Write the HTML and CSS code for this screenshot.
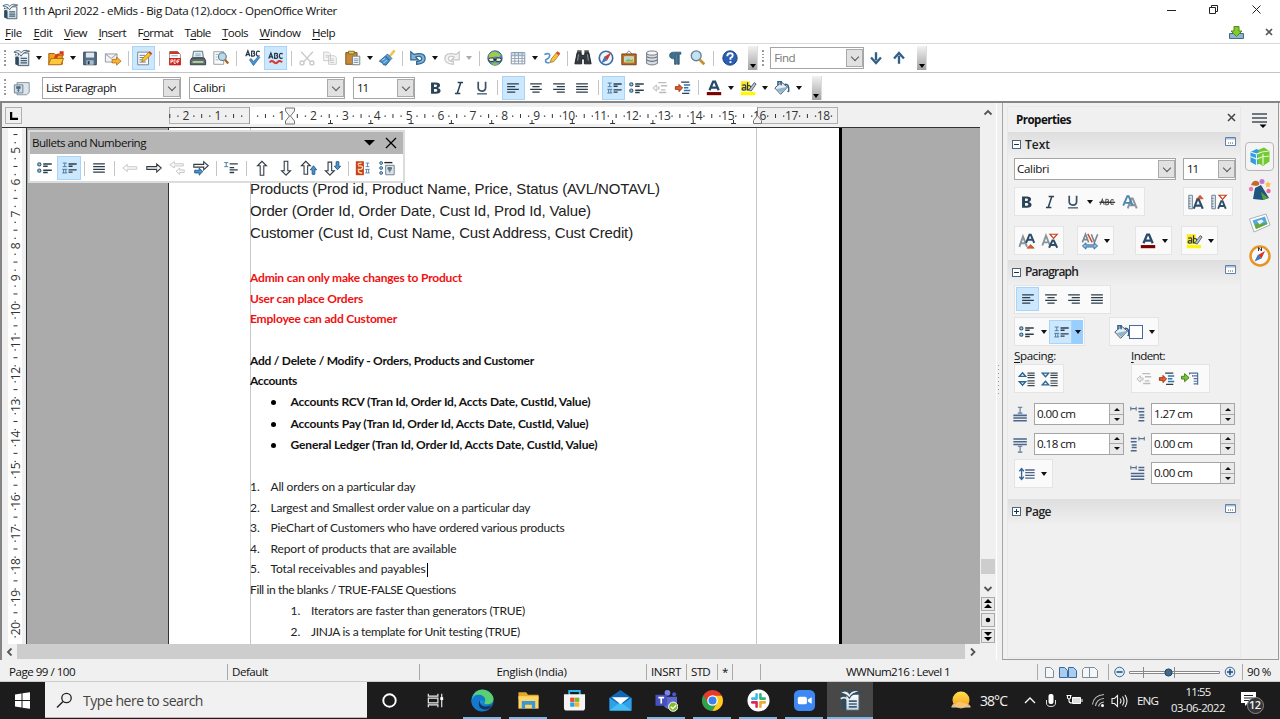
FILE: index.html
```html
<!DOCTYPE html>
<html lang="en">
<head>
<meta charset="utf-8">
<title>11th April 2022 - eMids - Big Data (12).docx - OpenOffice Writer</title>
<link rel="stylesheet" href="styles.css">
</head>
<body>
<svg class="defs" width="0" height="0">
  <defs>
  <linearGradient id="gEdge" x1="0" y1="0" x2="1" y2="1"><stop offset="0" stop-color="#2bb8e8"/><stop offset=".5" stop-color="#1b8fdc"/><stop offset="1" stop-color="#0c59a4"/></linearGradient>
  <linearGradient id="gSun" x1="0" y1="0" x2="0" y2="1"><stop offset="0" stop-color="#ffe14f"/><stop offset="1" stop-color="#f59a1b"/></linearGradient>
  <linearGradient id="gBox" x1="0" y1="0" x2="0" y2="1"><stop offset="0" stop-color="#fff"/><stop offset="1" stop-color="#c9d3dc"/></linearGradient>
  </defs>
  <symbol id="doc" viewBox="0 0 20 20"><path d="M6 4.500h11.500v14H6z" fill="url(#gBox)" stroke="#3d5566"/><path d="M2.500 5v12L6 18.500V8z" fill="#2c4a60"/><path d="M1 3.500C5 .5 8 2 9 4c2-3 6-3 9.500-1.500C14 3 11 4 9 8 7 5 5 4 1 3.500z" fill="#e9f0f4" stroke="#2d4b60" stroke-width=".9"/><path d="M1.500 8.500q4-2.500 6.500 1.500" fill="none" stroke="#dfe8ee" stroke-width="1.500"/><path d="M8.500 10.500h7M8.500 13h7M8.500 15.500h7" stroke="#3f6076" stroke-width="1.400"/></symbol>
  <symbol id="open" viewBox="0 0 20 20"><path d="M2 5h6l2 2h7v10H2z" fill="#f0a21f" stroke="#9b5b06"/><path d="M1.500 17.500l3-7h14l-3 7z" fill="#ffc83a" stroke="#a9670a"/><path d="M8 10c0-3 2-5 6-5V2.500h4.500V8L16 6c-3 0-4 1-4.500 4z" fill="#d83a16"/></symbol>
  <symbol id="save" viewBox="0 0 20 20"><path d="M3 3.500h14v14H3z" fill="#56708a" stroke="#26384b"/><path d="M5.500 4h9v5.500h-9z" fill="#dde7ee"/><path d="M6 12.500h8v5H6z" fill="#a9bccb"/><path d="M7.500 13.500h2V17h-2z" fill="#26384b"/></symbol>
  <symbol id="mail" viewBox="0 0 20 20"><path d="M1.500 5.500h13v9h-13z" fill="#f3f3f3" stroke="#8a94a0"/><path d="M1.500 5.500l6.500 5 6.500-5" fill="none" stroke="#8a94a0"/><path d="M9 11.500h5V9l5 4.500-5 4.500V15.500H9z" fill="#f9b233" stroke="#a8650b" stroke-width=".8"/></symbol>
  <symbol id="edit" viewBox="0 0 20 20"><path d="M3 3.500h12v14H3z" fill="#fbfbfb" stroke="#6f7e8c"/><path d="M5 7h6M5 9.500h6M5 12h3M5 14.500h7" stroke="#5d7284"/><path d="M7.500 14l1-3.500 7.500-7.500 2.500 2.500-7.500 7.500z" fill="#f9c330" stroke="#a56c09" stroke-width=".8"/><path d="M15 4l1.500-1.500 2.500 2.500L17.500 6.500z" fill="#d93a30"/></symbol>
  <symbol id="pdf" viewBox="0 0 20 20"><path d="M4 3h9l3 3v11.500H4z" fill="#fff" stroke="#8b8b8b"/><path d="M4 2.500h9l2.500 3H4z" fill="#c9372a"/><path d="M6 7.500h7" stroke="#999"/><path d="M3.500 10h13v8h-13z" fill="#cf2018"/><path d="M5.500 16v-4h2v2h-2M9 12v4h1.500l.8-1v-2l-.8-1zM13 16v-4h2.200M13 14h1.600" fill="none" stroke="#fff"/></symbol>
  <symbol id="print" viewBox="0 0 20 20"><path d="M5 2.500h10l1 7H4z" fill="#e4f0f5" stroke="#526572"/><path d="M7 5.500h6M7 7.500h6" stroke="#77a5b8"/><path d="M3 10h14l1.500 3v4.500h-17V13z" fill="#5d6b74" stroke="#2d3940"/><path d="M4 13.500h12v1.800H4z" fill="#c9e19a"/></symbol>
  <symbol id="preview" viewBox="0 0 20 20"><path d="M2 3h11v14H2z" fill="#fafafa" stroke="#8e98a1"/><path d="M4 6h3M4 9h2M4 12h3" stroke="#9aa"/><circle cx="11.500" cy="8.500" r="4.300" fill="#b8daf0" stroke="#66788a" stroke-width="1.300"/><path d="M14.500 12l3.500 4" stroke="#a8641a" stroke-width="2.500"/></symbol>
  <symbol id="spell" viewBox="0 0 20 20"><path d="M2 8l2.300-6L6.600 8M3 6.200h2.800M8.500 2V8h1.700q1.700 0 1.700-1.600t-1.700-1.500q1.400 0 1.400-1.400T10 2.300H8.500M17.500 3q-3.500-2-3.700 2 0 4 3.700 2.500" fill="none" stroke="#26384a" stroke-width="1.400"/><path d="M6 12l2-1.500 2.500 3.500 5.500-6 1.500 1.500-7 9z" fill="#4c92d0" stroke="#25629c" stroke-width=".7"/></symbol>
  <symbol id="auto" viewBox="0 0 20 20"><path d="M2 10.500l2.300-6 2.300 6M3 8.700h2.800M8.500 4.500v6h1.700q1.700 0 1.700-1.600t-1.700-1.500q1.400 0 1.400-1.400T10 4.800H8.500M17.500 5.500q-3.500-2-3.700 2 0 4 3.700 2.500" fill="none" stroke="#26384a" stroke-width="1.400"/><path d="M3 15q2.200-3 4.500-.5t4.500 0 4.800.3" fill="none" stroke="#d93a30" stroke-width="2.300"/></symbol>
  <symbol id="cut" viewBox="0 0 20 20"><g fill="none" stroke="#c9c9c9" stroke-width="1.500"><path d="M3.500 3l10 11M16.500 3l-10 11"/><circle cx="4.500" cy="15.500" r="2.200"/><circle cx="15.500" cy="15.500" r="2.200"/></g></symbol>
  <symbol id="copy" viewBox="0 0 20 20"><path d="M3 3.500h5.500l2 2V13H3zM8.500 7.500h6.500l2 2V17H8.500z" fill="#f7f7f7" stroke="#c6c6c6"/><path d="M5 7h4M5 9h3M10.500 11h4M10.500 13h4M10.500 15h4" stroke="#c6c6c6"/></symbol>
  <symbol id="paste" viewBox="0 0 20 20"><path d="M2 4h12.500v13H2z" fill="#c58a3c" stroke="#77480f"/><path d="M5 2.500h6.500v3H5z" fill="#e8d14c" stroke="#77651e"/><path d="M9.500 8h8v9.500h-8z" fill="#f6f8fa" stroke="#6c7b88"/><path d="M11 11h5M11 13h5M11 15h5" stroke="#7896ac"/></symbol>
  <symbol id="brush" viewBox="0 0 20 20"><path d="M18.500 1.500L13 8" stroke="#f0c34a" stroke-width="2.800"/><path d="M10.500 5.500l5 5-2 2-5-5z" fill="#5d9fd4" stroke="#416c96"/><path d="M8 8l5 5-4 5-3-.5-1-2-3.500-2z" fill="#4a92cf" stroke="#245b8e"/><path d="M4.500 12.500l3.500-2M6 15.500l4-3" stroke="#b7daf2"/></symbol>
  <symbol id="undo" viewBox="0 0 20 20"><path d="M2 3v9h8.500L7.500 9q5.500-2.500 6.500 1.500 0 3-5.500 3.500v3q9.500-.5 9.500-6.500Q17.500 3 5.500 6z" fill="#7fb2da" stroke="#2c608e" stroke-width="1.300"/></symbol>
  <symbol id="redo" viewBox="0 0 20 20"><path d="M18 3v9H9.500l3-3Q7 6.500 6 10.500q0 3 5.500 3.500v3Q2 16.500 2 10.500 2.500 3 14.500 6z" fill="#f3f3f3" stroke="#c6c6c6" stroke-width="1.300"/></symbol>
  <symbol id="globe" viewBox="0 0 20 20"><circle cx="10" cy="10" r="8" fill="#4b91c4" stroke="#335f80"/><path d="M3.500 6q3.500-4 7.500-3l5.500 3-2 3-4.500-1-3 2-4 1z" fill="#a4ca49"/><path d="M5.500 16.500q4.500-3 9 0-4.500 3-9 0z" fill="#8bbd41"/><rect x="3" y="10" width="6.500" height="3.800" rx="1.800" fill="#eee" stroke="#222"/><rect x="10.500" y="10" width="6.500" height="3.800" rx="1.800" fill="#eee" stroke="#222"/><path d="M8 11.800h4" stroke="#222"/></symbol>
  <symbol id="table" viewBox="0 0 20 20"><path d="M2.500 4h15v12.500h-15z" fill="#fff" stroke="#7489a0"/><path d="M3 4.500h14v3H3z" fill="#c3d6e8"/><path d="M2.500 7.500h15m-15 3h15m-15 3h15M6.500 4v12.500m4-12.500v12.500m4-12.500v12.500" stroke="#8b9dae"/></symbol>
  <symbol id="draw" viewBox="0 0 20 20"><path d="M1.500 6q6-2 6 1t-4.500 5q-1 4 4.500 3" fill="none" stroke="#5991ca" stroke-width="1.800"/><path d="M8 15l1.200-4 6.300-7.500 3 2L12 14z" fill="#f8c33a" stroke="#9b6812" stroke-width=".8"/><path d="M14.500 5l1.500-2.500 3 2L17.500 7z" fill="#d94c36"/></symbol>
  <symbol id="binoc" viewBox="0 0 20 20"><path d="M3.500 4H8v3h4V4h4.500L19 16.500h-7.500V11h-3v5.500H1z" fill="#343b42" stroke="#15191d"/><path d="M5 6L4 13M15 6l1 7" stroke="#9aa3ab"/><path d="M3.500 2.500h5M11.500 2.500h5" stroke="#555" stroke-width="2"/></symbol>
  <symbol id="compass" viewBox="0 0 20 20"><circle cx="10" cy="10" r="7.500" fill="#eef5fb" stroke="#3d6ba4" stroke-width="1.800"/><path d="M16 3.500l-4.500 9L8 9z" fill="#d53527"/><path d="M4.500 16l4-8 3 4.500z" fill="#3e76b9"/></symbol>
  <symbol id="gallery" viewBox="0 0 20 20"><path d="M6 6l4-4 4 4" fill="none" stroke="#777"/><path d="M2 5.500h16v12H2z" fill="#b5702a" stroke="#6d3c0b"/><path d="M5 8.500h10v6H5z" fill="#a5d8f5" stroke="#ebd6a1"/><path d="M5.500 14l3.500-3 3 1.500 2.500-1V14z" fill="#88b83a"/><circle cx="12" cy="10.500" r="1" fill="#f9d334"/></symbol>
  <symbol id="db" viewBox="0 0 20 20"><path d="M4 4.500v11.500q6 3.500 12 0V4.500z" fill="#d8dde2" stroke="#68727c"/><ellipse cx="10" cy="4.500" rx="6" ry="2.300" fill="#f6f6f6" stroke="#68727c"/><path d="M4 8.500q6 3 12 0M4 12.200q6 3 12 0" fill="none" stroke="#68727c" stroke-width="1.300"/></symbol>
  <symbol id="para" viewBox="0 0 20 20"><path d="M8.500 3.500h8v2.300h-1.800V17h-2V5.800h-1.200V17h-2v-6Q4 11 4 7.300 4 3.500 8.500 3.500z" fill="#3d7190" stroke="#234b64" stroke-width=".8"/></symbol>
  <symbol id="mag" viewBox="0 0 20 20"><circle cx="8" cy="7.500" r="5.500" fill="#c3e1f5" stroke="#6b8092" stroke-width="1.500"/><path d="M12 12l5 5" stroke="#c9902a" stroke-width="3"/></symbol>
  <symbol id="help" viewBox="0 0 20 20"><circle cx="10" cy="10" r="8" fill="#2a5db3" stroke="#163d80"/><path d="M7 8q0-3.300 3.100-3.300T13 7.300Q12.900 9 10.500 10v2" fill="none" stroke="#fff" stroke-width="2.100"/><path d="M9.500 13.500h2.100v2.100H9.500z" fill="#fff"/></symbol>
  <symbol id="fdown" viewBox="0 0 20 20"><path d="M10 3.500v9M4.500 9.500l5.500 6 5.500-6" fill="none" stroke="#315f86" stroke-width="2.600"/></symbol>
  <symbol id="fup" viewBox="0 0 20 20"><path d="M10 16.500v-9M4.500 10.500l5.500-6 5.500 6" fill="none" stroke="#315f86" stroke-width="2.600"/></symbol>
  <symbol id="styles" viewBox="0 0 20 20"><path d="M4.500 4h13.500v11l-3 2.500H4.500z" fill="#dfe6eb" stroke="#7c8d9b"/><path d="M1.500 6.500h9.500v9H1.500z" fill="#cfdbe4" stroke="#667c8e"/><path d="M4 8.500h4v2H4zM6 10.500v4M4.500 12.500h3" fill="#4f6c82" stroke="#4f6c82"/></symbol>
  <symbol id="bold" viewBox="0 0 20 20"><path fill-rule="evenodd" d="M4.500 4h5.200q4.800 0 4.800 3.100 0 2.200-2.500 2.800 3.100.5 3.100 3 0 3.600-5.300 3.600H4.500zM7.800 6.200v2.700h1.500q1.800 0 1.800-1.400T9.300 6.200zM7.800 11.200v3h1.700q2 0 2-1.500t-2-1.500z" fill="#2b4357"/></symbol>
  <symbol id="ital" viewBox="0 0 20 20"><path d="M8.500 4h6M5.500 16h6M12 4L8 16" fill="none" stroke="#2b4357" stroke-width="1.700"/></symbol>
  <symbol id="under" viewBox="0 0 20 20"><path d="M5.800 3V9.500q0 4 4.100 4t4.100-4V3" fill="none" stroke="#3c5366" stroke-width="1.900"/><path d="M4.500 16.500h11" stroke="#3c5366" stroke-width="1.400"/></symbol>
  <symbol id="al" viewBox="0 0 20 20"><path d="M3.500 5.500h13M3.500 8.500h9M3.500 11.500h13M3.500 14.500h9" stroke="#2b3c4a" stroke-width="1.400"/></symbol>
  <symbol id="ac" viewBox="0 0 20 20"><path d="M3.500 5.500h13M6 8.500h8M3.500 11.500h13M6 14.500h8" stroke="#2b3c4a" stroke-width="1.400"/></symbol>
  <symbol id="ar" viewBox="0 0 20 20"><path d="M3.500 5.500h13M7.500 8.500h9M3.500 11.500h13M7.500 14.500h9" stroke="#2b3c4a" stroke-width="1.400"/></symbol>
  <symbol id="aj" viewBox="0 0 20 20"><path d="M3.500 5.500h13M3.500 8.500h13M3.500 11.500h13M3.500 14.500h13" stroke="#2b3c4a" stroke-width="1.400"/></symbol>
  <symbol id="num" viewBox="0 0 20 20"><path d="M3 4.500h4.500m-2.200 0v4m-2.300 0h4.500M2.500 11.500H8M2.500 15.500H8M4 11.500v4M6.500 11.500v4" stroke="#4d7fa3" fill="none" stroke-width="1.100"/><path d="M9.500 5.500h9M9.500 8h4.500M9.500 12h9M9.500 14.500h4.500" stroke="#2b3c4a" stroke-width="1.500"/></symbol>
  <symbol id="bul" viewBox="0 0 20 20"><circle cx="3.700" cy="6" r="1.800" fill="#9fc2da" stroke="#2d5b7c" stroke-width="1.200"/><circle cx="3.700" cy="13" r="1.800" fill="#9fc2da" stroke="#2d5b7c" stroke-width="1.200"/><path d="M8 5.500h9.500M8 8h5M8 12.500h9.500M8 15h5" stroke="#2b3c4a" stroke-width="1.500"/></symbol>
  <symbol id="outd" viewBox="0 0 20 20"><path d="M2 10l4-3.500v2.300h3v2.400H6v2.300z" fill="#eee" stroke="#bcbcbc"/><path d="M8 4h9M11 7.500h7M11 12h5M9 15h8" stroke="#bcbcbc" stroke-width="1.400"/></symbol>
  <symbol id="ind" viewBox="0 0 20 20"><path d="M9.500 10L5.500 6v2.500H1.500v3h4V14z" fill="#e8602c" stroke="#8f2d08"/><path d="M8 3.500h9M9 16h8" stroke="#2b3c4a" stroke-width="1.400"/><path d="M11 6.700h7M11 9.700h5M11 12.800h7" stroke="#2f75ad" stroke-width="1.600"/></symbol>
  <symbol id="fcol" viewBox="0 0 20 20"><path d="M5 12.500L9 3h2.200l4 9.500M6.800 9.500H13.500" fill="none" stroke="#27496a" stroke-width="2.500"/><path d="M2 14.500h16v3.500H2z" fill="#7b0000"/></symbol>
  <symbol id="hcol" viewBox="0 0 20 20"><path d="M2 2.500h10v11H2z" fill="#ffe619"/><path d="M3.500 7Q7.500 5.500 7.500 8V12q-4 1-4-1t4-1M9.500 3.500V12q3.500.5 3.500-2.500t-3.500-2" fill="none" stroke="#243746" stroke-width="1.300"/><path d="M11 12l6-8 2 1.500-5.500 8z" fill="#b8c3ca" stroke="#495b66"/><path d="M2 14.500h16v3.500H2z" fill="#fff700"/></symbol>
  <symbol id="bucket" viewBox="0 0 20 20"><path d="M2 10l7.500-6.500 6.500 5.500-7.500 8z" fill="#e6eef3" stroke="#344b5d"/><path d="M4 11l5 4.500L15.500 9z" fill="#8db3cf"/><path d="M5.500 7V3h3.500v4M13 6q5-1 4.500 7-.5 2-1 0" fill="none" stroke="#2f6288" stroke-width="1.700"/></symbol>
  <symbol id="arl" viewBox="0 0 20 20"><path d="M2 10l5-4v2.600h10.500v2.800H7V14z" fill="#fafafa" stroke="#c3c3c3"/></symbol>
  <symbol id="arr" viewBox="0 0 20 20"><path d="M18 10l-5-4.500v3H2v3h11v3z" fill="#fafafa" stroke="#333b43" stroke-width="1.200"/></symbol>
  <symbol id="arll" viewBox="0 0 20 20"><path d="M2 6.500L7 3v2.300h10v2.400H7V10zM9 13.500l4-3.500v2.200h5V15h-5v2.200z" fill="#fafafa" stroke="#c3c3c3"/></symbol>
  <symbol id="arrr" viewBox="0 0 20 20"><path d="M18 7.500L13 3v3H2v3h11v3z" fill="#fafafa" stroke="#333b43" stroke-width="1.200"/><path d="M12 14L8 10v2.500H3v3h5V18z" fill="#4b93cc" stroke="#235b8a"/></symbol>
  <symbol id="aru" viewBox="0 0 20 20"><path d="M10 2.500L5 7.500h3V18h4V7.500h3z" fill="#fafafa" stroke="#333b43" stroke-width="1.200"/></symbol>
  <symbol id="ard" viewBox="0 0 20 20"><path d="M10 18l-5-5h3V2.500h4V13h3z" fill="#fafafa" stroke="#333b43" stroke-width="1.200"/></symbol>
  <symbol id="aruu" viewBox="0 0 20 20"><path d="M6.500 2.500L1.500 7.500h3V17h4V7.500h3z" fill="#fafafa" stroke="#333b43" stroke-width="1.200"/><path d="M15 7.500L11.500 12h2v5h3v-5h2z" fill="#4b93cc" stroke="#235b8a"/></symbol>
  <symbol id="ardd" viewBox="0 0 20 20"><path d="M6.500 18l-5-5h3V3.500h4V13h3z" fill="#fafafa" stroke="#333b43" stroke-width="1.200"/><path d="M15 12l-3.500-4h2V3h3v5h2z" fill="#4b93cc" stroke="#235b8a"/></symbol>
  <symbol id="nonum" viewBox="0 0 20 20"><path d="M2.500 4h4.500m-2.300 0v4.500m-2.200 0h4.500" stroke="#4d7fa3" fill="none" stroke-width="1.100"/><path d="M8.500 5.500h9M8.500 9.500h5M8.500 12h9M8.500 15h5" stroke="#2b3c4a" stroke-width="1.400"/></symbol>
  <symbol id="restart" viewBox="0 0 20 20"><path d="M2 2.500h9V18H2z" fill="#c9421d"/><path d="M4.500 6.500q0-2 4-2M4.500 8q5-1 5 1.500T5 11.500v2q0 2 4 2" fill="none" stroke="#ffe2a8" stroke-width="1.500"/><path d="M13 4.500h4m-2 0v4m-2 0h4M12.500 11.500h5M12.500 15.500h5M13.800 11.500v4M16.200 11.500v4" stroke="#4f86b0" fill="none"/></symbol>
  <symbol id="bdlg" viewBox="0 0 20 20"><circle cx="3.500" cy="4.500" r="1.600" fill="#9fc2da" stroke="#2d5b7c"/><circle cx="3.500" cy="10" r="1.600" fill="#9fc2da" stroke="#2d5b7c"/><circle cx="3.500" cy="15.500" r="1.600" fill="#9fc2da" stroke="#2d5b7c"/><path d="M7 4h9" stroke="#222" stroke-width="1.500"/><path d="M8.500 7H18v10.500H8.500z" fill="#dbe3e9" stroke="#66798a"/><path d="M11 9.500h4v2h-4zM13 11v4M11.500 13h3" fill="#5b7488" stroke="#5b7488"/></symbol>
  <symbol id="strike" viewBox="0 0 20 20"><path d="M2.500 13l2.300-6L7 13M8.700 7v6h1.500q1.700 0 1.700-1.500T10.200 10q1.400 0 1.400-1.500T10.200 7H8.700M17.500 8q-3.300-2-3.500 2 0 4 3.500 2" fill="none" stroke="#555" stroke-width="1.200"/><path d="M1.500 10.300h17.500" stroke="#222" stroke-width="1.300"/></symbol>
  <symbol id="shadow" viewBox="0 0 20 20"><path d="M7.500 17L11.500 6H13l4.500 11M9.500 13.500h6.500" fill="none" stroke="#8c959d" stroke-width="2.200"/><path d="M2.500 14L7 3.500h1.500l4.500 10.500M4.500 11h6.500" fill="none" stroke="#4c86ad" stroke-width="2.100"/></symbol>
  <symbol id="grow" viewBox="0 0 20 20"><path d="M2 2.500h4v15H2z" fill="#dde6ed" stroke="#65798a"/><path d="M2 6h2M2 9h2M2 12h2M2 15h2" stroke="#65798a"/><path d="M7.500 17.500l4-10.500H13l4.500 10.500M9.500 14h6.500" fill="none" stroke="#2d4d69" stroke-width="2.300"/><path d="M11 6.500l3.500-4 3.500 4z" fill="#e25a2b" stroke="#96300d" stroke-width=".6"/></symbol>
  <symbol id="shrink" viewBox="0 0 20 20"><path d="M2 2.500h4v15H2z" fill="#dde6ed" stroke="#65798a"/><path d="M2 6h2M2 9h2M2 12h2M2 15h2" stroke="#65798a"/><path d="M9 17.500L12.500 9H14l3.500 8.500M10.500 14.500h6" fill="none" stroke="#2d4d69" stroke-width="2.100"/><path d="M10 2.500h8l-4 4.500z" fill="#fff" stroke="#c8401b" stroke-width="1.300"/></symbol>
  <symbol id="sup" viewBox="0 0 20 20"><path d="M1.500 16.500L5.500 5l4.500 11.500M3 12.500h5.500" fill="none" stroke="#8a949c" stroke-width="2.100"/><path d="M9 12l3.700-9h1.500L18 12M10.500 8.700h6.500" fill="none" stroke="#2d4d69" stroke-width="2.200"/><path d="M10 18l4-4 4 4z" fill="#e25a2b" stroke="#96300d" stroke-width=".6"/></symbol>
  <symbol id="sub" viewBox="0 0 20 20"><path d="M1.500 15L5.500 4l4.500 11M3 11.500h5.500" fill="none" stroke="#8a949c" stroke-width="2.100"/><path d="M9 17.500l3.700-8h1.500l3.800 8M10.500 14.500h6.500" fill="none" stroke="#2d4d69" stroke-width="2.200"/><path d="M10 2.500h8L14 7z" fill="#fff" stroke="#c8401b" stroke-width="1.300"/></symbol>
  <symbol id="kern" viewBox="0 0 20 20"><path d="M1.500 11.500L5 2.500l3.500 9M2.500 8.500h5M11.500 2.500L15 11.500l3.500-9" fill="none" stroke="#7b8790" stroke-width="1.800"/><path d="M7.500 2l5 9.500" stroke="#d3422c" stroke-width="1.600"/><path d="M1.500 15.500l4-3.500v2.300h9V12l4 3.500-4 3.500v-2.300h-9V19z" fill="#89bce1" stroke="#2c6796"/></symbol>
  <symbol id="spinc" viewBox="0 0 20 20"><path d="M5 3l3.500 4h-7zM5 17l3.500-4h-7z" fill="#e6f3fb" stroke="#276696" stroke-width="1.500"/><path d="M10.500 3.500h8M10.500 6h8M10.500 8.500h8M10.500 12h8M10.500 14.700h8M10.500 17.300h8" stroke="#3c4a56" stroke-width="1.300"/></symbol>
  <symbol id="spdec" viewBox="0 0 20 20"><path d="M5 7.500L8.500 3.500h-7zM5 12.500l3.500 4h-7z" fill="#e6f3fb" stroke="#276696" stroke-width="1.500"/><path d="M10.500 3.500h8M10.500 6h8M10.500 8.500h8M10.500 12h8M10.500 14.700h8M10.500 17.300h8" stroke="#3c4a56" stroke-width="1.300"/></symbol>
  <symbol id="hang" viewBox="0 0 20 20"><path d="M.5 7H4V4l5 4.500L4 13v-3H.5z" fill="#79c537" stroke="#3a7b13"/><path d="M9.500 5V3.500H19M13 5.500v2M14 6.500h5M14 9.500h5M14 12.500h5M14 15.500h5M18.500 3.500v13" fill="none" stroke="#4c719d" stroke-width="1.300"/></symbol>
  <symbol id="above" viewBox="0 0 20 20"><path d="M6.500 2.500h5m-2.500 0V9m-2.500 0h5" fill="none" stroke="#5a7695" stroke-width="1.200"/><path d="M1.500 11.500h15M1.500 14.500h15M1.500 17.500h15" stroke="#4a668c" stroke-width="1.800"/></symbol>
  <symbol id="below" viewBox="0 0 20 20"><path d="M6.500 12.500h5m-2.500 0V19m-2.500 0h5" fill="none" stroke="#5a7695" stroke-width="1.200"/><path d="M1.500 4.500h15M1.500 7.500h15M1.500 10.500h15" stroke="#4a668c" stroke-width="1.800"/></symbol>
  <symbol id="before" viewBox="0 0 20 20"><path d="M2 2v4m0-2h6m0-2v4" fill="none" stroke="#5a7695" stroke-width="1.200"/><path d="M10.500 4h6.500M10.500 7.500H17M11.500 11H17M11.500 14H17M10.500 17.500H17" stroke="#4a668c" stroke-width="1.700"/></symbol>
  <symbol id="after" viewBox="0 0 20 20"><path d="M11 2v4m0-2h6m0-2v4" fill="none" stroke="#5a7695" stroke-width="1.200"/><path d="M2 4h6.500M2 7.500h6.500M3 11h5.500M3 14h5.500M2 17.500h6.500" stroke="#4a668c" stroke-width="1.700"/></symbol>
  <symbol id="first" viewBox="0 0 20 20"><path d="M2 2v4m0-2h6m0-2v4" fill="none" stroke="#5a7695" stroke-width="1.200"/><path d="M10.500 4H17M10.500 7H17M2 10.500h15M2 13.500h15M2 17h15" stroke="#4a668c" stroke-width="1.700"/></symbol>
  <symbol id="lsp" viewBox="0 0 20 20"><path d="M4 4.500v11M1.500 7L4 4l2.500 3M1.500 13L4 16l2.500-3" fill="none" stroke="#37669a" stroke-width="1.500"/><path d="M8 5.500h10.500M8 8.500h10.500M8 11.500h10.500M8 14.500h10.500" stroke="#4b6489" stroke-width="1.500"/></symbol>
  <symbol id="more" viewBox="0 0 11 9"><path d="M.5.500h10v8H.5z" fill="#fff" stroke="#6180ae"/><path d="M1 1h9v1.500H1z" fill="#a9bedb"/><path d="M3 6h1m1 0h1m1 0h1" stroke="#555"/></symbol>
</svg>

<div class="window">
  <header class="titlebar">
    <svg class="i16"><use href="#doc"/></svg>
    <span class="caption" data-w="315">11th April 2022 - eMids - Big Data (12).docx - OpenOffice Writer</span>
    <svg class="winbtns" viewBox="0 0 100 20"><path d="M1 9.500h9" stroke="#222"/><path d="M43.500 6.500h6v6h-6zM45.500 6V4.500h6v6H50" fill="none" stroke="#222"/><path d="M86.500 4.500l8 8m0-8l-8 8" stroke="#222"/></svg>
  </header>
  <nav class="menubar">
    <span data-w="17"><u>F</u>ile</span><span data-w="19"><u>E</u>dit</span><span data-w="23"><u>V</u>iew</span><span data-w="27.500"><u>I</u>nsert</span><span data-w="35.500">F<u>o</u>rmat</span><span data-w="26">T<u>a</u>ble</span><span data-w="26"><u>T</u>ools</span><span data-w="41"><u>W</u>indow</span><span data-w="23"><u>H</u>elp</span>
    <svg class="menuend" viewBox="0 0 46 18"><path d="M1.500 9.500h14v5h-14z" fill="#8ab6d3" stroke="#476a83"/><path d="M6 2.500h5V7h3l-5.500 5.500L3 7h3z" fill="#86c82d" stroke="#4c8a12"/><path d="M38 5l6 6m0-6l-6 6" stroke="#555" stroke-width="1.700"/></svg>
  </nav>

  <div class="toolbar">
    <i class="grip"></i>
    <b class="b"><svg><use href="#doc"/></svg></b><i class="dd"></i>
    <b class="b"><svg><use href="#open"/></svg></b><i class="dd"></i>
    <b class="b"><svg><use href="#save"/></svg></b><b class="b"><svg><use href="#mail"/></svg></b><i class="sep"></i>
    <b class="b on"><svg><use href="#edit"/></svg></b><i class="sep"></i>
    <b class="b"><svg><use href="#pdf"/></svg></b><b class="b"><svg><use href="#print"/></svg></b><b class="b"><svg><use href="#preview"/></svg></b><i class="sep"></i>
    <b class="b"><svg><use href="#spell"/></svg></b><b class="b on"><svg><use href="#auto"/></svg></b><i class="sep"></i>
    <b class="b"><svg><use href="#cut"/></svg></b><b class="b"><svg><use href="#copy"/></svg></b><b class="b"><svg><use href="#paste"/></svg></b><i class="dd"></i>
    <b class="b"><svg><use href="#brush"/></svg></b><i class="sep"></i>
    <b class="b"><svg><use href="#undo"/></svg></b><i class="dd"></i><b class="b"><svg><use href="#redo"/></svg></b><i class="dd off"></i><i class="sep"></i>
    <b class="b"><svg><use href="#globe"/></svg></b><b class="b"><svg><use href="#table"/></svg></b><i class="dd"></i><b class="b"><svg><use href="#draw"/></svg></b><i class="sep"></i>
    <b class="b"><svg><use href="#binoc"/></svg></b><b class="b"><svg><use href="#compass"/></svg></b><b class="b"><svg><use href="#gallery"/></svg></b><b class="b"><svg><use href="#db"/></svg></b><b class="b"><svg><use href="#para"/></svg></b><b class="b"><svg><use href="#mag"/></svg></b><i class="sep"></i>
    <b class="b"><svg><use href="#help"/></svg></b>
    <i class="over"></i><i class="grip second"></i>
    <div class="combo find"><span data-w="21">Find</span><i class="cb"></i></div>
    <b class="b"><svg><use href="#fdown"/></svg></b><b class="b"><svg><use href="#fup"/></svg></b>
    <i class="over"></i>
  </div>
  <div class="toolbar fmt">
    <i class="grip"></i>
    <b class="b"><svg><use href="#styles"/></svg></b>
    <div class="combo c-style"><span data-w="70">List Paragraph</span><i class="cb"></i></div>
    <div class="combo c-font"><span data-w="32">Calibri</span><i class="cb"></i></div>
    <div class="combo c-size"><span data-w="11">11</span><i class="cb"></i></div>
    <b class="b"><svg><use href="#bold"/></svg></b><b class="b"><svg><use href="#ital"/></svg></b><b class="b"><svg><use href="#under"/></svg></b><i class="sep"></i>
    <b class="b on"><svg><use href="#al"/></svg></b><b class="b"><svg><use href="#ac"/></svg></b><b class="b"><svg><use href="#ar"/></svg></b><b class="b"><svg><use href="#aj"/></svg></b><i class="sep"></i>
    <b class="b on"><svg><use href="#num"/></svg></b><b class="b"><svg><use href="#bul"/></svg></b><b class="b"><svg><use href="#outd"/></svg></b><b class="b"><svg><use href="#ind"/></svg></b><i class="sep"></i>
    <b class="b"><svg><use href="#fcol"/></svg></b><i class="dd"></i><b class="b"><svg><use href="#hcol"/></svg></b><i class="dd"></i><b class="b"><svg><use href="#bucket"/></svg></b><i class="dd"></i>
    <i class="over"></i>
  </div>

  <main class="work">
    <section class="editor">
      <div class="rulerrow">
        <i class="tabkind"><svg width="8" height="8"><path d="M1 0v7h7" fill="none" stroke="#000" stroke-width="2.500"/></svg></i>
        <svg class="hruler" id="hruler" width="960" height="25" viewBox="24 103 960 25"></svg>
      </div>
      <div class="canvasrow">
        <svg class="vruler" id="vruler" width="24" height="516" viewBox="2 128 24 516"></svg>
        <div class="canvas">
          <article class="page">
            <div class="frame">
              <p class="arial"><span data-w="410">Products (Prod id, Product Name, Price, Status (AVL/NOTAVL)</span></p>
              <p class="arial"><span data-w="341">Order (Order Id, Order Date, Cust Id, Prod Id, Value)</span></p>
              <p class="arial"><span data-w="383">Customer (Cust Id, Cust Name, Cust Address, Cust Credit)</span></p>
              <p class="arial blank">&nbsp;</p>
              <p class="red"><span data-w="212">Admin can only make changes to Product</span></p>
              <p class="red"><span data-w="113">User can place Orders</span></p>
              <p class="red"><span data-w="147">Employee can add Customer</span></p>
              <p>&nbsp;</p>
              <p class="bold"><span data-w="284">Add / Delete / Modify - Orders, Products and Customer</span></p>
              <p class="bold"><span data-w="47">Accounts</span></p>
              <p class="bold item"><i class="dot"></i><span data-w="300">Accounts RCV (Tran Id, Order Id, Accts Date, CustId, Value)</span></p>
              <p class="bold item"><i class="dot"></i><span data-w="298">Accounts Pay (Tran Id, Order Id, Accts Date, CustId, Value)</span></p>
              <p class="bold item"><i class="dot"></i><span data-w="307">General Ledger (Tran Id, Order Id, Accts Date, CustId, Value)</span></p>
              <p>&nbsp;</p>
              <p><em>1.</em><span data-w="145">All orders on a particular day</span></p>
              <p><em>2.</em><span data-w="260">Largest and Smallest order value on a particular day</span></p>
              <p><em>3.</em><span data-w="294">PieChart of Customers who have ordered various products</span></p>
              <p><em>4.</em><span data-w="186">Report of products that are available</span></p>
              <p><em>5.</em><span data-w="155">Total receivables and payables</span><i class="caret"></i></p>
              <p class="fill"><span data-w="206">Fill in the blanks / TRUE-FALSE Questions</span></p>
              <p class="deep"><em>1.</em><span data-w="214">Iterators are faster than generators (TRUE)</span></p>
              <p class="deep"><em>2.</em><span data-w="209">JINJA is a template for Unit testing (TRUE)</span></p>
            </div>
          </article>
          <div class="floatbar">
            <div class="fhead"><span data-w="114">Bullets and Numbering</span><svg width="36" height="14"><path d="M0 4h11l-5.500 5.500z"/><path d="M22 2l10 10m0-10L22 12" stroke="#000" stroke-width="1.300"/></svg></div>
            <div class="fbody">
              <b class="b"><svg><use href="#bul"/></svg></b><b class="b on"><svg><use href="#num"/></svg></b><i class="sep"></i>
              <b class="b"><svg><use href="#aj"/></svg></b><i class="sep"></i>
              <b class="b"><svg><use href="#arl"/></svg></b><b class="b"><svg><use href="#arr"/></svg></b><b class="b"><svg><use href="#arll"/></svg></b><b class="b"><svg><use href="#arrr"/></svg></b><i class="sep"></i>
              <b class="b"><svg><use href="#nonum"/></svg></b><i class="sep"></i>
              <b class="b"><svg><use href="#aru"/></svg></b><b class="b"><svg><use href="#ard"/></svg></b><b class="b"><svg><use href="#aruu"/></svg></b><b class="b"><svg><use href="#ardd"/></svg></b><i class="sep"></i>
              <b class="b"><svg><use href="#restart"/></svg></b><b class="b"><svg><use href="#bdlg"/></svg></b>
            </div>
          </div>
        </div>
      </div>
      <div class="hscroll"><svg width="15" height="16"><path d="M9.500 4.500l-3.500 3.500 3.500 3.500" fill="none" stroke="#555" stroke-width="1.800"/></svg><i class="thumb"></i><svg width="15" height="16"><path d="M6 4.500l3.500 3.500L6 11.500" fill="none" stroke="#555" stroke-width="1.800"/></svg></div>
    </section>
    <div class="vscroll">
      <svg width="16" height="20"><path d="M4.500 11.500L8 8l3.500 3.500" fill="none" stroke="#555" stroke-width="1.800"/></svg>
      <i class="vthumb"></i>
      <svg width="16" height="18"><path d="M4.500 8L8 11.500 11.500 8" fill="none" stroke="#555" stroke-width="1.800"/></svg>
      <b class="nav"><svg width="12" height="12"><path d="M6 1l4 4H2zM6 6l4 4H2z"/></svg></b>
      <b class="nav"><svg width="12" height="12"><circle cx="6" cy="6" r="2.300"/></svg></b>
      <b class="nav"><svg width="12" height="12"><path d="M6 6l4-4H2zM6 11l4-4H2z"/></svg></b>
    </div>
    <div class="splitter"></div>
    <aside class="sidebar">
      <div class="deck">
        <div class="dtitle"><span data-w="55">Properties</span><svg width="9" height="9"><path d="M1 1l7 7m0-7L1 8" stroke="#444" stroke-width="1.500"/></svg></div>
        <h3><i class="pm"></i><span data-w="25">Text</span><svg class="more"><use href="#more"/></svg></h3>
        <div class="row r-combo"><div class="combo s-font"><span data-w="32">Calibri</span><i class="cb"></i></div><div class="combo s-size"><span data-w="11">11</span><i class="cb"></i></div></div>
        <div class="row r-a">
          <div class="grp g130"><b class="b"><svg><use href="#bold"/></svg></b><b class="b"><svg><use href="#ital"/></svg></b><b class="b"><svg><use href="#under"/></svg></b><i class="dd"></i><b class="b"><svg><use href="#strike"/></svg></b><b class="b"><svg><use href="#shadow"/></svg></b></div>
          <div class="grp g50 m39"><b class="b"><svg><use href="#grow"/></svg></b><b class="b"><svg><use href="#shrink"/></svg></b></div>
        </div>
        <div class="row r-b">
          <div class="grp g50"><b class="b"><svg><use href="#sup"/></svg></b><b class="b"><svg><use href="#sub"/></svg></b></div>
          <div class="grp g37 m13"><b class="b"><svg><use href="#kern"/></svg></b><i class="dd"></i></div>
          <div class="grp g37 m21"><b class="b"><svg><use href="#fcol"/></svg></b><i class="dd"></i></div>
          <div class="grp g37 m9"><b class="b"><svg><use href="#hcol"/></svg></b><i class="dd"></i></div>
        </div>
        <h3><i class="pm"></i><span data-w="53">Paragraph</span><svg class="more"><use href="#more"/></svg></h3>
        <div class="row r-c"><div class="grp g96"><b class="b on"><svg><use href="#al"/></svg></b><b class="b"><svg><use href="#ac"/></svg></b><b class="b"><svg><use href="#ar"/></svg></b><b class="b"><svg><use href="#aj"/></svg></b></div></div>
        <div class="row r-d">
          <div class="grp g70"><b class="b"><svg><use href="#bul"/></svg></b><i class="dd"></i><b class="b on"><svg><use href="#num"/></svg></b><i class="dd hot"></i></div>
          <div class="grp g50 m25"><b class="b"><svg><use href="#bucket"/></svg></b><i class="swatch"></i><i class="dd"></i></div>
        </div>
        <div class="labels"><span data-w="42"><u>S</u>pacing:</span><span data-w="34"><u>I</u>ndent:</span></div>
        <div class="row r-e">
          <div class="grp g50"><b class="b"><svg><use href="#spinc"/></svg></b><b class="b"><svg><use href="#spdec"/></svg></b></div>
          <div class="grp g78 m67"><b class="b"><svg><use href="#outd"/></svg></b><b class="b"><svg><use href="#ind"/></svg></b><b class="b"><svg><use href="#hang"/></svg></b></div>
        </div>
        <div class="spins">
          <svg><use href="#above"/></svg><div class="spin"><span data-w="38.500">0.00 cm</span><i class="ud"></i></div>
          <svg><use href="#before"/></svg><div class="spin"><span data-w="38.500">1.27 cm</span><i class="ud"></i></div>
          <svg><use href="#below"/></svg><div class="spin"><span data-w="38.500">0.18 cm</span><i class="ud"></i></div>
          <svg><use href="#after"/></svg><div class="spin"><span data-w="38.500">0.00 cm</span><i class="ud"></i></div>
          <div class="grp lsp"><b class="b"><svg><use href="#lsp"/></svg></b><i class="dd"></i></div>
          <svg><use href="#first"/></svg><div class="spin"><span data-w="38.500">0.00 cm</span><i class="ud"></i></div>
        </div>
        <h3 class="pg"><i class="pm plus"></i><span data-w="26">Page</span><svg class="more"><use href="#more"/></svg></h3>
      </div>
      <div class="tabs">
        <svg class="burger" width="18" height="17"><path d="M1 2h15M1 6h15M1 10h15" stroke="#444e57" stroke-width="1.700"/><path d="M8.500 12.500h7L12 16z"/></svg>
        <div class="tab sel"><svg width="22" height="22" viewBox="0 0 22 22"><path d="M1.500 6l6-3L12 5v12l-5 2-5.500-3z" fill="#2f9de0"/><path d="M10 3.500l5-2L20.500 5v10.500L14 20l-5-3V9z" fill="#73ca2f"/><path d="M1.500 10.500l6 2.500 5.500-2 7-1M7.500 8v11M14 8v11M1.500 6l6 2L13 6l7-1" fill="none" stroke="#e6f7dc" stroke-width="1.200"/></svg></div>
        <div class="tab"><svg width="24" height="24" viewBox="0 0 24 24"><path d="M5 21l2-11 6-3 8 13-6 2z" fill="#1f557e"/><path d="M13 14l7 6-5 2z" fill="#55a531"/><path d="M3 7q2-5 6-4 3 1 2 4l-3 1z" fill="#c56a29"/><circle cx="14" cy="3.500" r="2.500" fill="#be73d7"/><path d="M20 3l1 2.200 2.300.3-1.700 1.700.4 2.300-2-1.100-2 1.100.4-2.300-1.700-1.700 2.300-.3z" fill="#fbbc46"/><circle cx="3" cy="11" r="2.200" fill="#ec78b6"/><circle cx="20.500" cy="13" r="2.200" fill="#f0699b"/></svg></div>
        <div class="tab"><svg width="24" height="24" viewBox="0 0 24 24"><path d="M1.500 8L18 3l4 11L6 21z" fill="#fff" stroke="#a8b2ba"/><path d="M4.500 9.500L17 5.500l2.500 7.500L8 18z" fill="#54a8df"/><path d="M6.500 14l5-3 3 2 4-2 1 2L8 18z" fill="#68a638"/><path d="M9 10l5-1.500 1.500 2-4 3z" fill="#e7f3fa"/></svg></div>
        <div class="tab"><svg width="24" height="24" viewBox="0 0 24 24"><circle cx="12" cy="12" r="9.500" fill="#f7fafc" stroke="#e79424" stroke-width="2.500"/><path d="M17 7l-3.500 7.500L10 11z" fill="#d53527"/><path d="M6.500 17.500l3.500-7 3.500 4z" fill="#3e76b9"/><path d="M10.500 7V3.500l3 3.500V3.500" fill="none" stroke="#333"/></svg></div>
      </div>
    </aside>
  </main>

  <footer class="status">
    <span class="s1"><span data-w="66">Page 99 / 100</span></span><span class="s2"><span data-w="36">Default</span></span><span class="s3"><span data-w="70">English (India)</span></span><span class="s4"><span data-w="30">INSRT</span></span><span class="s5"><span data-w="19">STD</span></span><span class="s6">*</span><span class="s7"></span><span class="s8"><span data-w="104">WWNum216 : Level 1</span></span>
    <span class="s9"><svg width="57" height="14"><g fill="#f4f6f8" stroke="#7d8c9a"><path d="M4.500 2.500h5l3 3v7h-8z"/><path d="M18.500 2.500h5l3 3v7h-8zM27.500 2.500h5l3 3v7h-8z" fill="#a9cdee" stroke="#38689c"/><path d="M41.500 4.500l2-2h5v10h-7zM48.500 2.500h5l3 3v7h-8z"/></g></svg></span>
    <span class="s10"><svg width="130" height="16"><g fill="#dceafa" stroke="#45698f"><circle cx="10.500" cy="8" r="4.800"/><circle cx="121" cy="8" r="4.800"/></g><path d="M7.500 8h6M118 8h6M121 5v6" stroke="#234a74" stroke-width="1.500"/><path d="M20.500 7.500h90v2h-90z" fill="#fff" stroke="#888"/><path d="M34.500 3v11M65.500 3v11" stroke="#888"/><circle cx="59.500" cy="8.500" r="3.600" fill="#3f6a90" stroke="#234463"/></svg></span>
    <span class="s11"><span data-w="24">90 %</span></span>
  </footer>

  <div class="taskbar">
    <svg class="start" width="45" height="37"><path d="M15 12.500l6.500-1v6.500H15zM22.500 11.300l7.500-1v7.700h-7.500zM15 19h6.500v6.500L15 24.500zM22.500 19H30v7.700l-7.500-1z" fill="#fff"/></svg>
    <div class="search"><svg width="17" height="17"><circle cx="10.500" cy="6" r="4.700" fill="none" stroke="#222" stroke-width="1.300"/><path d="M7 9.500L1 15.500" stroke="#222" stroke-width="1.400"/></svg><span data-w="120">Type here to search</span></div>
    <div class="app"><svg viewBox="0 0 24 24"><circle cx="12" cy="12" r="6.500" fill="none" stroke="#fff" stroke-width="2"/></svg></div>
    <div class="app w47"><svg viewBox="0 0 24 24"><path d="M4.500 5v2.500h10V5M4.500 19v-2.500h10V19M4.500 9.500h10v5h-10zM18.500 5v14" fill="none" stroke="#eee" stroke-width="1.200"/><path d="M17 8.500h3v3h-3z" fill="#fff"/></svg></div>
    <div class="app run"><svg viewBox="0 0 24 24"><circle cx="12" cy="12" r="11.500" fill="url(#gEdge)"/><path d="M2 7Q7-1 16 1.500q7.500 3 7.500 9.500-1 5-6.500 5-3 0-3-2 2-2-.5-5Q9 4 2 7z" fill="#5bd070"/><path d="M.5 12q3-7 9.500-6 6 2 4.500 7l-4.500-2q-3 6 2 9 5 1 9-2-5 6-12 5Q.5 20 .5 12z" fill="#1479cd"/><path d="M10 11q-2 4 2 6.500 5 2 9.500-.5l-2 3q-6 3-10.500-1-2-4 1-8z" fill="#11365e"/></svg></div>
    <div class="app run"><svg viewBox="0 0 24 24"><path d="M1.500 3.500h8l2 2.500h11v5h-21z" fill="#e4a72c"/><path d="M1.500 7.500h21v13h-21z" fill="#ffd665"/><path d="M5 20.500v-8h14v8h-3.500v-4h-7v4z" fill="#3a97d8"/></svg></div>
    <div class="app"><svg viewBox="0 0 24 24"><path d="M6.500 7V2h11v5" fill="none" stroke="#31b7ef" stroke-width="2"/><path d="M1 5.500h22v14q0 3-3 3H4q-3 0-3-3z" fill="#f4f4f4"/><path d="M7.500 9H12v4.500H7.500z" fill="#ef4b2d"/><path d="M12.500 9H17v4.500h-4.500z" fill="#7cb82e"/><path d="M7.500 14H12v4.500H7.500z" fill="#27a4e7"/><path d="M12.500 14H17v4.500h-4.500z" fill="#f6b51f"/></svg></div>
    <div class="app"><svg viewBox="0 0 24 24"><path d="M.5 9L12 1l11.500 8v13.500H.5z" fill="#1267b4"/><path d="M.5 9l11.500 8 11.500-8v13.500H.5z" fill="#2ea2e8"/><path d="M.5 22.500L12 13.500l11.500 9z" fill="#46bdf4"/><path d="M3 8.500h18L12 16z" fill="#fff"/></svg></div>
    <div class="app run"><svg viewBox="0 0 24 24"><circle cx="13" cy="4" r="3" fill="#7b83eb"/><circle cx="20" cy="5.500" r="2" fill="#5059c9"/><path d="M9 8h14v8q-2 5-8 5-6-1-6-5z" fill="#5f68d0"/><path d="M.5 6h12v11.500H.5z" fill="#4751bd"/><path d="M3.500 9h6M6.500 9v6" stroke="#fff" stroke-width="1.700"/><circle cx="19" cy="18.500" r="4.800" fill="#83bb2b" stroke="#fff"/><path d="M16.500 18.500l2 2 3.500-3.500" fill="none" stroke="#fff" stroke-width="1.400"/></svg></div>
    <div class="app run"><svg viewBox="0 0 24 24"><circle cx="12" cy="12" r="11" fill="#e33b2e"/><path d="M2.500 6.500A11 11 0 0 0 12 23L16.500 14.500 12 17 7.500 14.500z" fill="#2ca24c"/><path d="M12 23A11 11 0 0 0 21.700 7H12l4.800 7z" fill="#fdcc1c"/><circle cx="12" cy="12" r="5.500" fill="#fff"/><circle cx="12" cy="12" r="4.200" fill="#4180ec"/></svg></div>
    <div class="app run"><svg viewBox="0 0 24 24"><circle cx="12" cy="12" r="11.500" fill="#fff"/><g stroke-width="2.700" stroke-linecap="round"><path d="M10 5.500v4.500M5.500 10H10" stroke="#37bcec"/><path d="M14 5.500V10M14 10h4.500" stroke="#2fb47c"/><path d="M14 14h4.500M14 14v4.500" stroke="#e8ae2e"/><path d="M5.500 14H10M10 14v4.500" stroke="#de285c"/></g></svg></div>
    <div class="app run"><svg viewBox="0 0 24 24"><rect x="1" y="1" width="22" height="22" rx="5.500" fill="#3f88f4"/><rect x="5" y="8" width="9.500" height="8" rx="2" fill="#fff"/><path d="M15.500 11l4-2.500v7l-4-2.500z" fill="#fff"/></svg></div>
    <div class="app run active"><svg><use href="#doc"/></svg></div>
    <div class="tray">
      <svg class="sun" width="22" height="20"><circle cx="11" cy="9" r="8.500" fill="url(#gSun)"/><path d="M1.500 16q1-4 4-3 3-4 7-1 2-1 3.500 1 4-.5 4.500 3z" fill="#f6c878" opacity=".9"/><path d="M1.500 16h19" stroke="#d9cfc4"/></svg>
      <span class="temp" data-w="27">38°C</span>
      <svg class="ico" width="14" height="20"><path d="M2 12l5-5 5 5" fill="none" stroke="#fff" stroke-width="1.300"/></svg>
      <svg class="ico i2" width="12" height="20"><rect x="3.500" y="3" width="5" height="10" rx="2" fill="#fff"/><path d="M1.500 9v3q0 3.500 4.500 3.500t4.500-3.500V9" fill="none" stroke="#ddd"/></svg>
      <svg class="ico i3" width="18" height="20"><path d="M1.500 4v3q1.500 2 3 0V4M3 8v2q0 2 3 2M.5 4.500h5" fill="none" stroke="#fff" stroke-width="1.100"/><path d="M6.500 6.500h8v6h-8z" fill="#ddd" stroke="#fff"/><path d="M15.500 8h1v3h-1z" fill="#fff"/></svg>
      <svg class="ico i4" width="14" height="20"><path d="M1.500 13.500q1-9 11.500-10M4.500 15q1-7 8.500-7.500M7.500 15.500q1-4 5.500-4.500" fill="none" stroke="#bbb" stroke-width="1.200"/><circle cx="11.500" cy="14.500" r="1.500" fill="#fff"/></svg>
      <svg class="ico i5" width="17" height="20"><path d="M1 7.500h2.500l3-3v11l-3-3H1zM9 7.500q2 2.500 0 5M11.500 5.500q3 4.500 0 9M14 4q4 6 0 12" fill="none" stroke="#eee" stroke-width="1.100"/></svg>
      <span class="lang" data-w="21">ENG</span>
      <div class="clock"><span data-w="25">11:55</span><span data-w="54">03-06-2022</span></div>
      <div class="note"><svg width="24" height="25"><path d="M1 2h15v11H8l-3 3v-3H1z" fill="#fff"/><path d="M4 5.500h9M4 8h9M4 10.500h6" stroke="#222"/><circle cx="15.500" cy="15.500" r="8" fill="#343434" stroke="#888"/></svg><span>12</span></div>
    </div>
  </div>
</div>
<script src="app.js"></script>
</body>
</html>
```

FILE: styles.css
```css
* { box-sizing: border-box; }
body { margin: 0; background: #fff; font: 11.600px/16px "Open Sans", "Noto Sans", sans-serif; color: #111; overflow: hidden; }
i, em { font-style: normal; }
svg { display: block; flex: none; }
.defs { position: absolute; }
[data-w] { display: inline-block; white-space: nowrap; }
u { text-underline-offset: 2px; }

.window { width: 1280px; height: 719px; display: flex; flex-direction: column; overflow: hidden; }
.titlebar { height: 22px; display: flex; align-items: center; padding-left: 2px; flex: none; }
.i16 { width: 17px; height: 17px; margin-right: 3px; }
.winbtns { width: 100px; height: 20px; margin-left: auto; margin-right: 14px; }
.menubar { height: 22px; display: flex; align-items: center; gap: 11.500px; padding-left: 5px; border-bottom: 1px solid #d9d9d9; flex: none; }
.menuend { width: 46px; height: 18px; margin-left: auto; margin-right: 6px; }

.toolbar { height: 29px; display: flex; align-items: center; border-bottom: 1px solid #c5c5c5; flex: none; }
.fmt { border-bottom: 0; }
.grip { width: 2px; height: 17px; margin: 0 4px 0 4px; background: repeating-linear-gradient(#999 0 1.500px, transparent 1.500px 3.500px); flex: none; }
.b { width: 23px; height: 24px; display: flex; align-items: center; justify-content: center; flex: none; }
.b svg { width: 18px; height: 18px; }
.on { background: #cce8ff; border: 1px solid #a9d4f7; }
.sep { width: 8.400px; height: 15px; flex: none; background: linear-gradient(#c4c4c4, #c4c4c4) center / 1px 100% no-repeat; }
.dd { width: 11px; height: 22px; flex: none; display: flex; align-items: center; justify-content: center; }
.dd::after { content: ""; border: 3px solid transparent; border-top: 4px solid #111; border-bottom: 0; }
.off::after { border-top-color: #aaa; }
.over { width: 9px; height: 24px; margin-left: 7px; background: linear-gradient(#f2f2f2, #a2a2a2); flex: none; display: flex; align-items: flex-end; justify-content: center; padding-bottom: 2px; align-self: flex-end; margin-bottom: 2px; box-shadow: 1px 0 0 #ddd; }
.over::after { content: ""; border: 3px solid transparent; border-top: 4px solid #000; border-bottom: 0; }
.second { margin: 0 6px 0 5px; }
.combo { height: 22px; border: 1px solid #a5a5a5; background: #fff; display: flex; align-items: center; padding-left: 3px; flex: none; }
.cb { width: 17px; height: 18px; margin: 0 0 0 auto; border: 1px solid #aaa; background: #e1e1e1; display: flex; align-items: center; justify-content: center; }
.cb::after { content: ""; width: 5px; height: 5px; border: solid #555; border-width: 0 1px 1px 0; transform: translateY(-1px) rotate(45deg); }
.find { width: 94px; color: #777; }
.c-style { width: 139px; margin-left: 9px; }
.c-font { width: 156px; margin-left: 8px; }
.c-size { width: 62px; margin: 0 9.500px 0 8px; }

.work { height: 559px; display: flex; background: #f0f0f0; border-top: 2px solid #858585; flex: none; margin-top: -1px; }
.editor { width: 980px; border-left: 2px solid #858585; display: flex; flex-direction: column; }
.rulerrow { height: 25px; display: flex; border-bottom: 1px solid #333; }
.tabkind { width: 17px; height: 17px; margin: 4px 2px 0 3px; border: 1px solid #b0b0b0; display: flex; align-items: center; justify-content: center; flex: none; }
.canvasrow { height: 516px; display: flex; }
.canvas { width: 954px; height: 516px; background: #ababab; border-left: 1px solid #333; position: relative; overflow: hidden; }
.page { width: 674px; height: 516px; margin-left: 141px; background: #fff; border-left: 1px solid #333; border-right: 3px solid #000; padding-left: 81px; }
.frame { width: 507px; height: 516px; border: solid #c8c8c8; border-width: 0 1px; padding-top: 49.600px; font: 12px/20.600px Lato, sans-serif; }
.frame p { margin: 0 0 0 -1px; height: 20.600px; display: flex; align-items: center; color: #222; }
.frame p.arial { font: 15px/22.400px "Liberation Sans", sans-serif; height: 22.400px; }
.frame p.blank { height: 23.400px; }
.frame p.red { color: #f01010; font-weight: 700; }
.frame p.bold { color: #111; font-weight: 700; }
.frame p.item { height: 21.600px; padding-left: 21px; }
.frame p.fill { height: 21.200px; }
.dot { width: 5px; height: 5px; border-radius: 50%; background: #000; margin-right: 14.500px; }
em { width: 20.500px; flex: none; }
.deep { padding-left: 40.500px; }
.caret { width: 1px; height: 14px; background: #000; margin-left: 1px; }
.floatbar { position: absolute; left: 1px; top: 2px; width: 377px; height: 53px; background: #fff; border: 2px solid #dcdcdc; }
.fhead { height: 22px; background: #b5b5b5; display: flex; align-items: center; padding: 0 3px 0 2px; }
.fhead svg { margin-left: auto; }
.fbody { height: 28px; display: flex; align-items: center; padding-left: 3.500px; }
.fbody .b { width: 23.600px; }
.fbody .sep { width: 7px; }
.hscroll { height: 16px; display: flex; }
.thumb { width: 948px; height: 15px; background: #cdcdcd; }

.vscroll { width: 16px; display: flex; flex-direction: column; align-items: center; }
.vthumb { width: 14px; height: 15px; margin-top: 436px; margin-bottom: 5px; background: #cdcdcd; }
.nav { width: 14px; height: 14px; margin-bottom: 2px; border: 1px solid #aaa; background: #e8e8e8; display: flex; align-items: center; justify-content: center; flex: none; }
.splitter { width: 7px; height: 557px; border-right: 1px solid #a5a5a5; background: repeating-linear-gradient(#999 0 1px, transparent 1px 4px) 1px 262px / 1px 30px no-repeat, #f0f0f0; border-left: 1px solid #fff; }
.sidebar { width: 276px; display: flex; border: solid #9a9a9a; border-width: 0 1px 1px 0; }
.deck { width: 236px; margin: 3px 0 0 4px; border: 1px solid #e8e8e8; height: 552px; }
.dtitle { height: 25px; display: flex; align-items: center; font-weight: 700; padding: 0 4px 0 8px; }
.dtitle svg { margin-left: auto; margin-top: -4px; }
.deck h3 { height: 25px; margin: 0; font-size: 12px; font-weight: 600; color: #222; display: flex; align-items: center; padding: 0 4px 0 4px; background: linear-gradient(#dedede, #efefef); }
.more { width: 11px; height: 9px; margin-left: auto; margin-top: -6px; }
.pm { width: 9px; height: 9px; margin-right: 4px; border: 1px solid #4b6578; background: linear-gradient(#234, #234) center / 5px 1px no-repeat, #fff; }
.plus { background: linear-gradient(#234, #234) center / 5px 1px no-repeat, linear-gradient(#234, #234) center / 1px 5px no-repeat, #fff; }
.row { display: flex; margin-left: 6px; }
.r-combo { margin-top: 1px; }
.s-font { width: 162px; padding-left: 2px; }
.s-size { width: 53px; margin-left: 7px; padding-left: 3px; }
.grp { height: 29px; display: flex; align-items: center; background: #fafafa; border: 1px solid #e4e4e4; flex: none; }
.g130 { width: 131px; } .g50 { width: 50px; } .g37 { width: 37px; } .g96 { width: 97px; } .g70 { width: 71px; } .g78 { width: 79px; }
.m39 { margin-left: 38px; } .m13 { margin-left: 13px; } .m21 { margin-left: 21px; } .m9 { margin-left: 9px; } .m25 { margin-left: 24px; } .m67 { margin-left: 67px; }
.r-a { margin-top: 7px; } .r-b { margin: 10px 0 4.500px 6px; } .r-c { margin-top: 0; } .r-d { margin-top: 3.500px; }
.r-c .grp { padding-left: 1px; }
.hot { background: #99cfff; height: 24px; }
.swatch { width: 14px; height: 14px; border: 1px solid #456aa0; background: #fff; margin-left: -4px; margin-right: 3px; flex: none; }
.labels { display: flex; gap: 75px; padding: 1.500px 0 0 6px; height: 18px; }
.spins { display: grid; grid-template-columns: 20px 90px 7px 20px 84px; row-gap: 7.700px; margin: 10px 0 0 6px; align-items: center; }
.spins > svg { width: 18px; height: 18px; margin-left: -2px; }
.spins > svg:nth-of-type(even) { grid-column: 4; }
.spin { height: 22px; border: 1px solid #a5a5a5; background: #fff; display: flex; align-items: center; padding-left: 2px; }
.ud { width: 14px; height: 20px; margin-left: auto; border-left: 1px solid #aaa; display: flex; flex-direction: column; align-items: center; justify-content: space-around; background: linear-gradient(#aaa, #aaa) 0 50% / 100% 1px no-repeat, #e9e9e9; }
.ud::before { content: ""; border: 3px solid transparent; border-bottom: 3.500px solid #111; border-top: 0; }
.ud::after { content: ""; border: 3px solid transparent; border-top: 3.500px solid #111; border-bottom: 0; }
.lsp { width: 39px; grid-column: 1 / span 2; margin: -4px 0 -5px; }
.lsp + svg { grid-column: 4; }
.deck h3.pg { margin-top: 15px; }
.tabs { width: 37px; display: flex; flex-direction: column; align-items: center; }
.burger { margin: 9px 0 11px; }
.tab { width: 29px; height: 29px; display: flex; align-items: center; justify-content: center; margin-bottom: 4px; flex: none; }
.sel { border: 1px solid #b7b7b7; border-radius: 4px; background: #f4f4f4; margin-top: 2px; }

.status { height: 22px; background: #f0f0f0; display: flex; align-items: center; flex: none; border-bottom: 1px solid #ccc; padding-top: 3px; }
.status > span { height: 16px; border-left: 1px solid #aaa; padding-left: 4px; flex: none; display: flex; align-items: center; }
.status > .s1 { width: 227px; border: 0; padding-left: 9px; }
.s2 { width: 192px; }
.status > .s3 { width: 227px; justify-content: center; padding: 0 4px 0 0; padding-right: 3px; }
.s4 { width: 40px; } .s5 { width: 31px; } .s6 { width: 15px; } .s7 { width: 28px; }
.status > .s8 { width: 277px; justify-content: center; padding: 0 2px 0 0; }
.status > .s9 { width: 71px; padding-left: 3px; }
.status > .s10 { width: 134px; padding: 0; }
.s11 { width: 37px; }

.taskbar { height: 37px; background: #1c1c1c; display: flex; flex: none; color: #f2f2f2; }
.search { width: 322px; height: 36px; background: #f1f1f1; color: #444; display: flex; align-items: center; font-size: 14px; gap: 10px; padding: 2px 0 0 11px; margin-right: -1px; border-bottom: 1px solid #bbb; flex: none; }
.app { width: 46px; display: flex; align-items: center; justify-content: center; border-bottom: 2px solid transparent; flex: none; padding-top: 2px; }
.app svg { width: 23px; height: 23px; }
.w47 { width: 47px; }
.run { background: linear-gradient(#76b9ed, #76b9ed) center bottom / 38px 2px no-repeat border-box; }
.active { background-color: #484848; background-size: 46px 2px; }
.tray { display: flex; align-items: center; flex: 1; padding-left: 77px; }
.temp { font-size: 14px; margin-left: 8px; }
.ico { margin-left: 16px; }
.i2 { margin-left: 8px; } .i3 { margin-left: 9px; } .i4 { margin-left: 7px; } .i5 { margin-left: 6px; }
.lang { margin-left: 9px; }
.clock { width: 62px; margin-left: 9px; display: flex; flex-direction: column; align-items: center; font-size: 11.300px; margin-top: -1px; }
.note { position: relative; margin-left: 11px; padding-top: 4px; }
.note span { position: absolute; left: 9px; top: 11px; font-size: 11px; font-weight: 600; letter-spacing: -.5px; }
```

FILE: app.js
```js
// Tracks each label so that it fills its nominal width.
document.querySelectorAll('[data-w]').forEach(function (el) {
  var n = el.textContent.length;
  el.style.letterSpacing = ((el.dataset.w - el.getBoundingClientRect().width) / n).toFixed(3) + 'px';
});

var CM = 31.88;
function shape(svg, tag, attrs, text) {
  var e = document.createElementNS('http://www.w3.org/2000/svg', tag);
  for (var k in attrs) e.setAttribute(k, attrs[k]);
  if (text !== undefined) e.textContent = text;
  svg.appendChild(e);
}

// Horizontal ruler: margins, centimetre numbers, tab stops, indent markers.
var h = document.getElementById('hruler');
shape(h, 'rect', { x: 169.5, y: 107.5, width: 668, height: 16, fill: '#f0f0f0', stroke: '#b0b0b0' });
shape(h, 'rect', { x: 250, y: 107, width: 507, height: 17, fill: '#fff' });
shape(h, 'path', { d: 'M249.500 107v17M757.500 107v17', stroke: '#999' });
for (var q = -10; q <= 73; q++) {
  var x = 249.5 + q * CM / 4, cm = Math.abs(q / 4);
  if (q === 0) continue;
  if (q % 4 === 0) shape(h, 'text', { x: x, y: 120, 'text-anchor': 'middle', 'font-size': 12, fill: '#333', 'letter-spacing': -0.4 }, cm);
  else if (q % 2 === 0) shape(h, 'rect', { x: x - 0.5, y: 114, width: 1, height: 4, fill: '#333' });
  else shape(h, 'rect', { x: x - 0.5, y: 115.5, width: 1.3, height: 1.3, fill: '#333' });
}
for (var t = 330; t < 750; t += 40.3) shape(h, 'path', { d: 'M' + (t - 2) + ' 123.500h5M' + (t + 0.5) + ' 120v3', stroke: '#333' });
shape(h, 'path', { d: 'M285.500 108h9v3l-4 5 4 5v3h-9v-3l4-5-4-5z', fill: '#f4f4f4', stroke: '#777' });
shape(h, 'path', { d: 'M753.500 123.500v-3l4-5 4 5v3z', fill: '#f4f4f4', stroke: '#777' });

// Vertical ruler: the numbers are turned to read upwards.
var v = document.getElementById('vruler');
shape(v, 'rect', { x: 8, y: 128, width: 14, height: 516, fill: '#fff' });
for (var p = 18; p <= 82; p++) {
  var y = 150.5 + (p - 20) * CM / 4;
  if (p % 4 === 0) shape(v, 'text', { x: 0, y: 0, transform: 'translate(20 ' + y + ') rotate(-90)', 'text-anchor': 'middle', 'font-size': 12, fill: '#333', 'letter-spacing': -0.4 }, p / 4);
  else if (p % 2 === 0) shape(v, 'rect', { x: 13.5, y: y - 0.5, width: 4, height: 1, fill: '#333' });
  else shape(v, 'rect', { x: 14.5, y: y - 0.5, width: 1.3, height: 1.3, fill: '#333' });
}
```
